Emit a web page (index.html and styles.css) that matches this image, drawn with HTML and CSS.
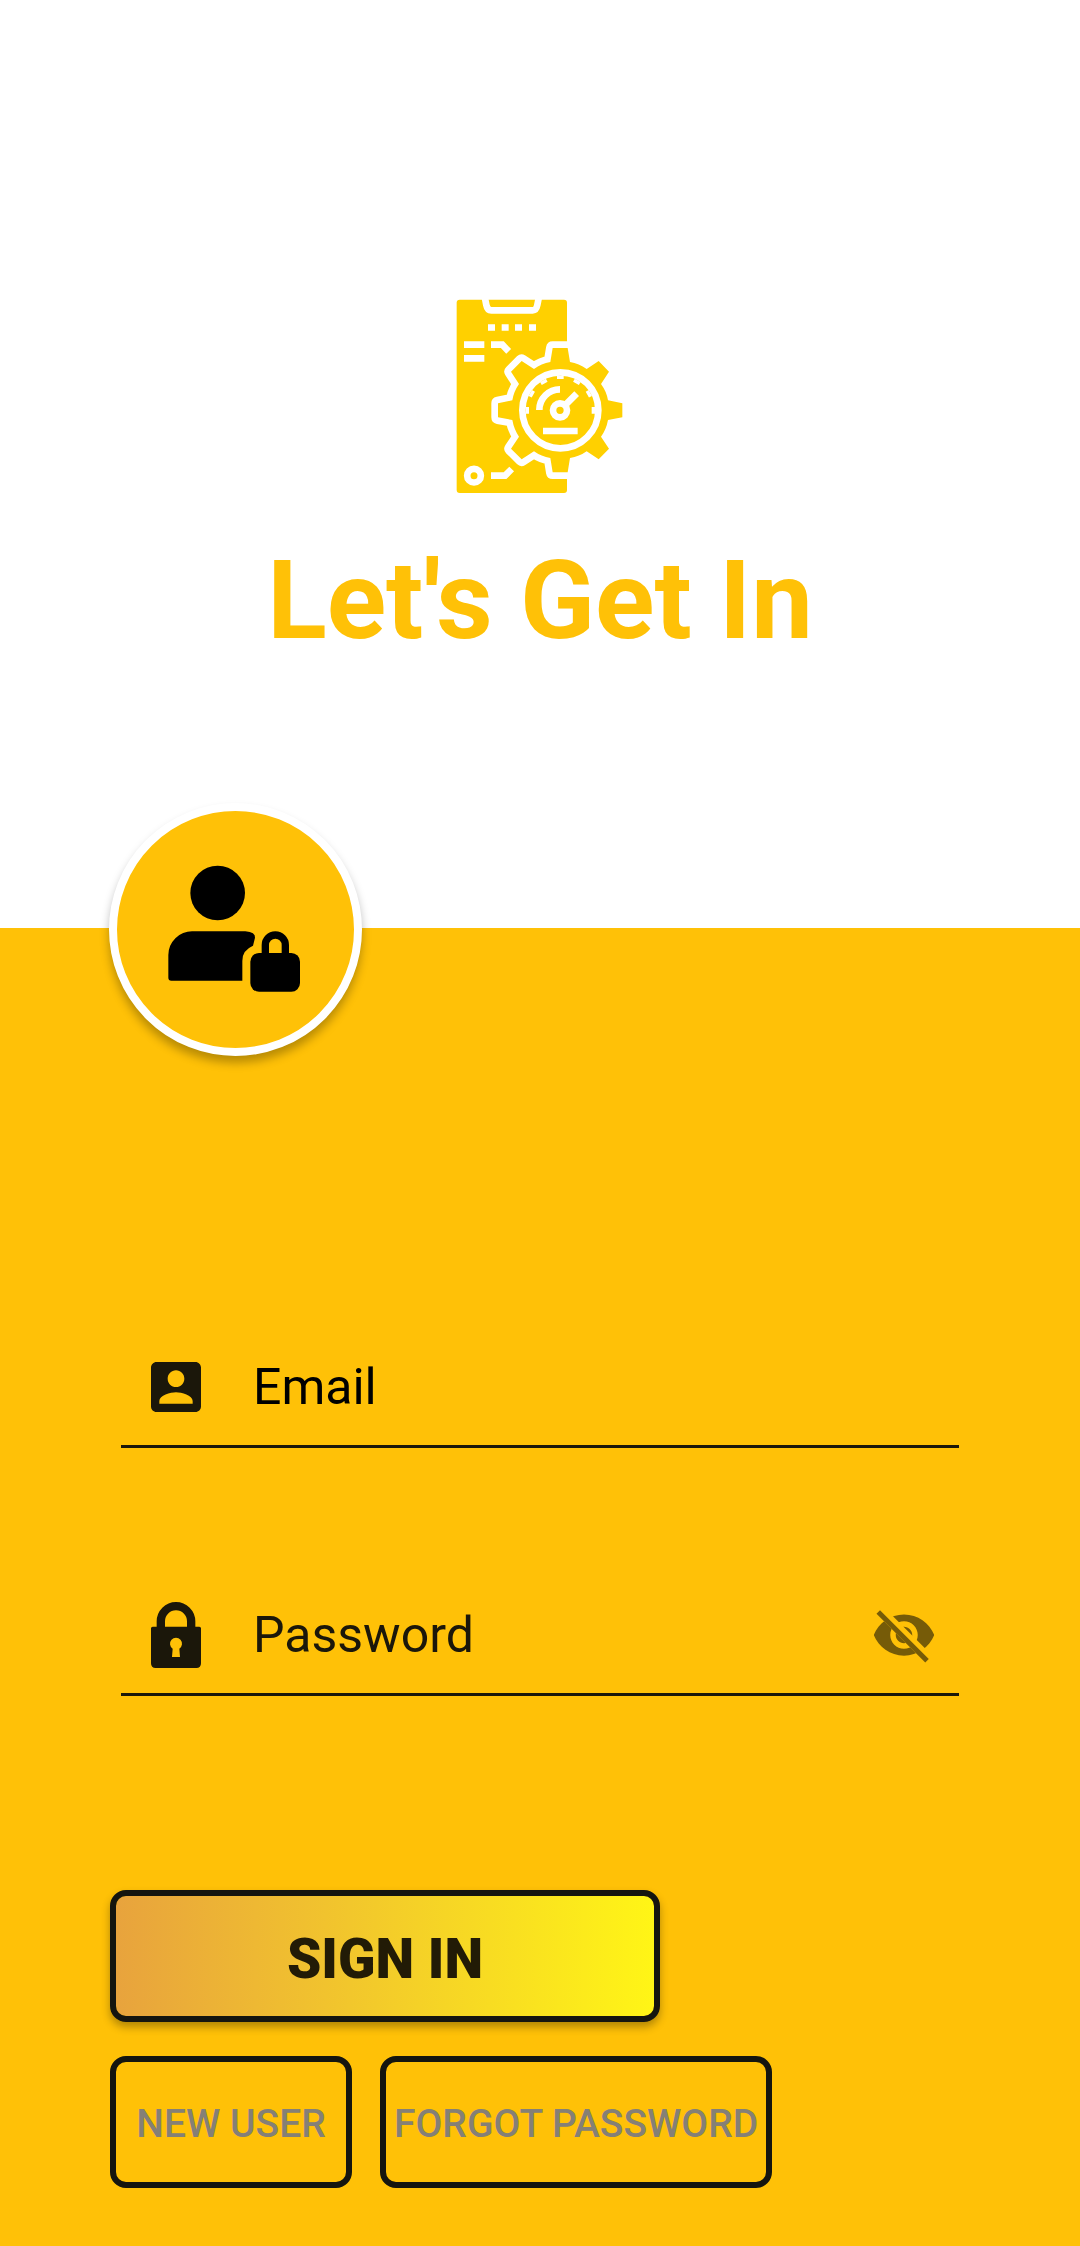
FILE: index.html
```html
<!DOCTYPE html>
<html lang="en">
<head>
<meta charset="utf-8">
<meta name="viewport" content="width=device-width, initial-scale=1">
<title>Let's Get In</title>
<link rel="stylesheet" href="styles.css">
</head>
<body>
<div class="page">
  <header class="hero">
    <svg class="logo" viewBox="0 0 600 690" aria-hidden="true">
      <rect class="brand" x="50" y="59" width="331" height="580" rx="9"/>
      <g class="line">
        <path d="M134 50 139 75Q142 91 154 91H278Q289 91 292 75L297 50"/>
        <path d="M72 194H133M72 235H133M153 194H187L206 214M153 587H195L215 567"/>
        <path d="M144 142.500h21M185 142.500h21M225 142.500h21M267 142.500h21"/>
        <circle cx="102" cy="587" r="20.500"/>
      </g>
      <path class="gear" d="M338 204H383L390 246Q417 251 440 267L476 243 507 275 483 312Q500 335 504 361L547 370V412L504 420Q499 448 483 470L507 506 476 538 440 514Q418 530 390 534L383 577H338L331 534Q304 530 282 514L245 538 213 506 237 470Q222 448 217 420L174 412V370L217 361Q221 335 237 312L213 275 245 243 282 267Q304 251 331 246Z"/>
      <g class="line">
        <circle cx="361" cy="391" r="114"/>
        <path d="M257 391h10M465 391h-10M361 287v10M271 339l9 5M309 301l5 9M413 301l-5 9M451 339l-9 5"/>
        <path d="M298 390A62 62 0 0 1 360 328"/>
        <circle cx="360" cy="391" r="21"/>
        <path d="M374 377 410 341"/>
        <path d="M309 453H413"/>
      </g>
    </svg>
    <h1 class="title">Let's Get In</h1>
  </header>

  <main class="panel">
    <div class="badge">
      <svg viewBox="80 60 711 711" aria-hidden="true">
        <circle cx="382" cy="306" r="82"/>
        <path d="M234 560V492A71 71 0 0 1 306 421H465Q496 424 494 440L488 464Q455 478 456 510V569H243Q234 569 234 560Z"/>
        <rect x="480" y="486" width="149" height="116" rx="26"/>
        <path class="shackle" d="M525 490V462A30 30 0 0 1 585 462V490"/>
      </svg>
    </div>

    <form class="form">
      <div class="field field-email">
        <label for="email" aria-label="Email">
          <svg class="account" viewBox="3 3 18 18" aria-hidden="true"><path d="M3 5v14c0 1.100.890 2 2 2h14c1.100 0 2-.9 2-2V5c0-1.100-.9-2-2-2H5c-1.110 0-2 .9-2 2zm12 4c0 1.660-1.340 3-3 3s-3-1.340-3-3 1.340-3 3-3 3 1.340 3 3zm-9 8c0-2 4-3.100 6-3.100s6 1.100 6 3.100v1H6v-1z"/></svg>
        </label>
        <input id="email" type="email" placeholder="Email">
      </div>
      <div class="field">
        <label for="password" aria-label="Password">
          <svg class="lock" viewBox="0 0 150 198" aria-hidden="true">
            <path class="bow" d="M29.500 80V58A45.500 45.500 0 0 1 120.500 58V80"/>
            <path fill-rule="evenodd" d="M5 74H145Q150 74 150 79V184Q150 198 136 198H14Q0 198 0 184V79Q0 74 5 74ZM63 165H87L85 140A18 18 0 1 0 65 140Z"/>
          </svg>
        </label>
        <input id="password" type="password" placeholder="Password">
        <button class="toggle" type="button" aria-label="Show password">
          <svg viewBox="0 0 24 24" aria-hidden="true">
            <clipPath id="cut"><path d="M2 4.270 19.730 22 22.270 19.460 4.540 1.730V1H23V23H1V4.270Z"/></clipPath>
            <path clip-path="url(#cut)" d="M12 4.500C7 4.500 2.730 7.610 1 12c1.730 4.390 6 7.500 11 7.500s9.270-3.110 11-7.500c-1.730-4.390-6-7.500-11-7.500zM12 17c-2.760 0-5-2.240-5-5s2.240-5 5-5 5 2.240 5 5-2.240 5-5 5zm0-8c-1.660 0-3 1.340-3 3s1.340 3 3 3 3-1.340 3-3-1.340-3-3-3z"/>
            <path d="M2 4.270 3.270 3 21 20.730 19.730 22Z"/>
          </svg>
        </button>
      </div>

      <div class="actions">
        <button class="btn primary" type="submit">SIGN IN</button>
        <div class="links">
          <button class="btn" type="button">NEW USER</button>
          <button class="btn" type="button">FORGOT PASSWORD</button>
        </div>
      </div>
    </form>
  </main>
</div>
</body>
</html>
```

FILE: styles.css
```css
* { box-sizing: border-box; }

body {
  margin: 0;
  background: #fff;
  font-family: Roboto, sans-serif;
}

svg { display: block; }

.page {
  min-height: 100vh;
  display: flex;
  flex-direction: column;
}

.hero {
  display: flex;
  flex-direction: column;
  align-items: center;
  gap: 27px;
  padding: 280px 24px 263px;
}

.logo { width: 200px; height: 230px; }
.brand { fill: #ffd000; }
.line { fill: none; stroke: #fff; stroke-width: 20px; }
.gear {
  fill: #ffd000;
  stroke: #fff;
  stroke-width: 40px;
  stroke-linejoin: round;
  paint-order: stroke;
}

.title {
  margin: 0;
  font-size: 110px;
  line-height: 128px;
  font-weight: 700;
  color: #ffc107;
}

.panel {
  position: relative;
  flex: 1;
  padding: 401px 110px 58px;
  background: #ffc107;
}

.badge {
  position: absolute;
  top: -125px;
  left: 109px;
  width: 253px;
  height: 253px;
  border: 8px solid #fff;
  border-radius: 50%;
  background: #ffc107;
  box-shadow: 0 7px 10px rgba(0, 0, 0, 0.28);
}
.shackle { fill: none; stroke: #000; stroke-width: 22px; }

.field {
  display: flex;
  align-items: center;
  height: 119px;
  margin: 0 11px 129px;
  padding: 0 22px 0 30px;
  border-bottom: 3px solid #1b170a;
}
.field label { margin-right: 52px; color: #1b170a; }
.field label svg { width: 50px; fill: currentColor; }
.account { height: 50px; }
.lock { height: 66px; }
.bow { fill: none; stroke: currentColor; stroke-width: 25px; }

.field input {
  flex: 1;
  min-width: 0;
  height: 80px;
  padding: 0;
  border: 0;
  outline: 0;
  background: transparent;
  font: 400 50px/60px Roboto, sans-serif;
  color: #000;
}
.field input::placeholder { color: #1b170a; opacity: 1; }
.field-email input::placeholder { color: #000; }

.toggle {
  padding: 0;
  border: 0;
  background: transparent;
}
.toggle svg { width: 66px; height: 66px; fill: #765b08; }

.actions {
  display: flex;
  flex-direction: column;
  align-items: flex-start;
  gap: 34px;
  padding-top: 65px;
}
.links { display: flex; flex-wrap: wrap; gap: 28px; }

.btn {
  min-width: 242px;
  height: 132px;
  padding: 3px 8px 0;
  border: 6px solid #15150f;
  border-radius: 16px;
  background: transparent;
  font: 500 39px/46px Roboto, sans-serif;
  color: #858076;
}
.primary {
  width: 550px;
  max-width: 100%;
  padding-top: 6px;
  background: linear-gradient(90deg, #e8a33d, #fff516) padding-box;
  font-size: 55px;
  line-height: 64px;
  font-weight: 900;
  color: #221b06;
  box-shadow: 0 5px 8px rgba(0, 0, 0, 0.3);
}
```
